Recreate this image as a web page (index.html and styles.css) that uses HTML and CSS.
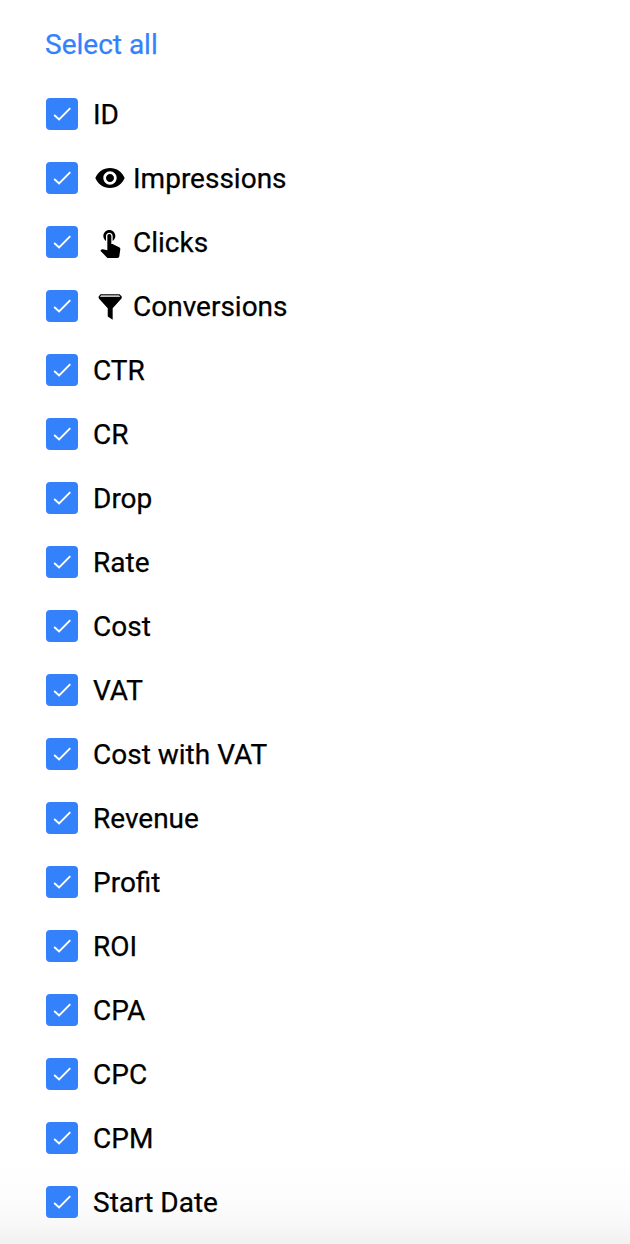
FILE: index.html
```html
<!DOCTYPE html>
<html lang="en">
<head>
  <meta charset="utf-8">
  <title>Columns</title>
  <meta name="viewport" content="width=device-width, initial-scale=1.0">
  <link rel="stylesheet" href="styles.css">
</head>
<body>
  <svg class="defs">
    <symbol id="check" viewBox="0 0 32 32">
      <path d="M8.200 17l4.900 4.500L24.300 10.200" fill="none" stroke="#fff" stroke-width="1.900"/>
    </symbol>
  </svg>
  <div class="panel">
    <a class="select-all">Select all</a>
    <ul class="columns" id="columns"></ul>
  </div>
<script src="script.js"></script>
</body>
</html>
```
FILE: styles.css
```css
body {
  margin: 0;
  background: #fff;
  color: #000;
  font-family: Roboto, "Liberation Sans", sans-serif;
  font-size: 28px;
  -webkit-text-stroke: 0.25px currentColor;
}
.defs {
  display: none;
}
.panel {
  height: 1244px;
  box-sizing: border-box;
  padding: 28px 45px 0;
  overflow: hidden;
  background: linear-gradient(to bottom, #fff 1160px, #fcfcfc 1205px, #f8f8f8 1224px, #f1f1f1 1244px);
}
.select-all {
  display: block;
  height: 32px;
  line-height: 34px;
  color: #3382fb;
  cursor: pointer;
}
.columns {
  list-style: none;
  margin: 38px 0 0;
  padding: 0 0 0 1px;
  display: flex;
  flex-direction: column;
  gap: 32px;
}
.column {
  display: flex;
  align-items: flex-start;
  height: 32px;
  line-height: 34px;
  white-space: nowrap;
}
.box {
  width: 32px;
  height: 32px;
  margin-right: 15px;
  border-radius: 4px;
  background: #3382fb;
}
.icon {
  width: 32px;
  height: 32px;
  margin: 0 7px 0 1px;
}
```
FILE: script.js
```js
const icons = {
  eye: '<path d="M12 4.500C7 4.500 2.730 7.610 1 12c1.730 4.390 6 7.500 11 7.500s9.270-3.110 11-7.500c-1.730-4.390-6-7.500-11-7.500zM12 17c-2.760 0-5-2.240-5-5s2.240-5 5-5 5 2.240 5 5-2.240 5-5 5zm0-8c-1.660 0-3 1.340-3 3s1.340 3 3 3 3-1.340 3-3-1.340-3-3-3z"/>',
  tap: '<path d="M9 11.240V7.500C9 6.120 10.120 5 11.500 5S14 6.120 14 7.500v3.740c1.210-.81 2-2.180 2-3.740C16 5.010 13.990 3 11.500 3S7 5.010 7 7.500c0 1.560.79 2.930 2 3.740zm9.840 4.630l-4.540-2.260c-.17-.07-.35-.11-.54-.11H13v-6c0-.83-.67-1.500-1.500-1.500S10 6.670 10 7.500v10.740l-3.430-.72c-.08-.01-.15-.03-.24-.03-.31 0-.59.13-.79.33l-.79.8 4.940 4.940c.27.27.65.44 1.060.44h6.790c.75 0 1.330-.55 1.440-1.280l.75-5.270c.01-.07.02-.14.02-.2 0-.62-.38-1.160-.91-1.380z"/>',
  funnel: '<path d="M4.900 3.200h14.300l1.600 1.600v1.300l-6.800 7.500v8.700l-3.700-2.500v-6.200L3.500 6.100V4.800z"/><path d="M5.300 4h13.500l.9 1.200H4.400z" fill="#c4c4c4"/>'
};

const columns = [
  ['ID'], ['Impressions', 'eye'], ['Clicks', 'tap'], ['Conversions', 'funnel'],
  ['CTR'], ['CR'], ['Drop'], ['Rate'], ['Cost'], ['VAT'], ['Cost with VAT'],
  ['Revenue'], ['Profit'], ['ROI'], ['CPA'], ['CPC'], ['CPM'], ['Start Date']
];

document.getElementById('columns').innerHTML = columns.map(([name, icon]) => `
  <li class="column">
    <svg class="box"><use href="#check"/></svg>
    ${icon ? `<svg class="icon" viewBox="0 0 24 24">${icons[icon]}</svg>` : ''}
    <span>${name}</span>
  </li>`).join('');
```
